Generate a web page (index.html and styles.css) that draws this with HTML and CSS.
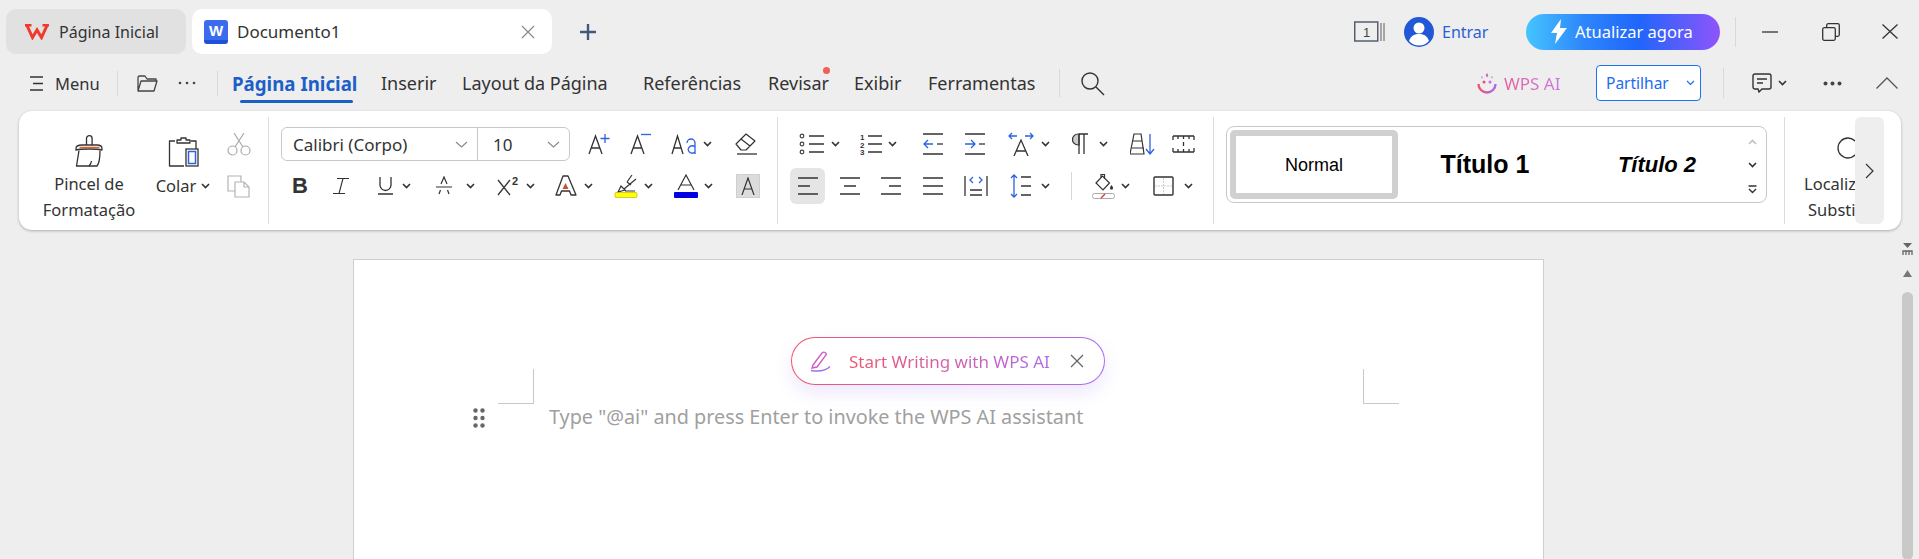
FILE: index.html
```html
<!DOCTYPE html>
<html lang="pt">
<head>
<meta charset="utf-8">
<title>Documento1</title>
<link rel="stylesheet" href="styles.css">
</head>
<body>
<svg class="defs" width="0" height="0"><defs>
<symbol id="chev" viewBox="0 0 9 6"><path d="M1 1l3.500 3.500L8 1" fill="none" stroke="#333" stroke-width="1.600"/></symbol>
</defs></svg>

<header class="tabbar">
  <div class="tab tab-home">
    <svg class="wps-logo" width="24" height="16" viewBox="0 0 24 16"><path d="M2 1.500L7.500 13.500 12 6l4.500 7.500L22 1.500" fill="none" stroke="#f0392b" stroke-width="3"/><path d="M0 1.300h6.500M17.500 1.300H24" stroke="#f0392b" stroke-width="2.600"/></svg>
    <span>Página Inicial</span>
  </div>
  <div class="tab tab-doc">
    <span class="doc-icon">W</span>
    <span class="doc-name">Documento1</span>
    <svg class="tab-close" width="14" height="14" viewBox="0 0 14 14"><path d="M1 1l12 12M13 1L1 13" stroke="#8a8a8a" stroke-width="1.200"/></svg>
  </div>
  <svg class="plus" width="20" height="20" viewBox="0 0 20 20"><path d="M10 2v16M2 10h16" stroke="#46587a" stroke-width="2.400"/></svg>
  <div class="win-right">
    <svg class="count" width="31" height="21" viewBox="0 0 31 21"><rect x=".75" y="1" width="23" height="19" fill="none" stroke="#555e70" stroke-width="1.500"/><path d="M27 2v18M30 2v18" stroke="#777" stroke-width="1.200"/><text x="9" y="16" class="count-n">1</text></svg>
    <svg class="avatar" width="30" height="30" viewBox="0 0 30 30"><circle cx="15" cy="15" r="15" fill="#2257d8"/><circle cx="15" cy="11" r="5.500" fill="#fff"/><path d="M5 24c2-6 6-7 10-7s8 1 10 7c-3 3-6 4.500-10 4.500S8 27 5 24z" fill="#fff"/></svg>
    <span class="enter">Entrar</span>
    <div class="upgrade">
      <svg width="16" height="25" viewBox="0 0 16 25"><path d="M10 0L0 14h6l-2 11L16 9h-7z" fill="#fff"/></svg>
      <span>Atualizar agora</span>
    </div>
    <i class="sep sep-win"></i>
    <svg class="win-min" width="16" height="2" viewBox="0 0 16 2"><path d="M0 1h16" stroke="#333" stroke-width="1.300"/></svg>
    <svg class="win-max" width="18" height="18" viewBox="0 0 18 18"><rect x=".7" y="4.700" width="12.600" height="12.600" rx="1.500" fill="none" stroke="#333" stroke-width="1.300"/><path d="M4.700 4.500V2.200A1.500 1.500 0 0 1 6.200.7h9.600a1.500 1.500 0 0 1 1.500 1.500v9.600a1.500 1.500 0 0 1-1.500 1.500h-2.300" fill="none" stroke="#333" stroke-width="1.300"/></svg>
    <svg class="win-close" width="16" height="15" viewBox="0 0 16 15"><path d="M.5.500l15 14M15.500.500l-15 14" stroke="#333" stroke-width="1.300"/></svg>
  </div>
</header>

<nav class="menubar">
  <svg class="m-burger" width="13" height="15" viewBox="0 0 13 15"><path d="M0 1h13M3 7.500h10M0 14h13" stroke="#333" stroke-width="1.300"/></svg>
  <span class="m-menu">Menu</span>
  <i class="sep sep-m1"></i>
  <svg class="m-folder" width="21" height="17" viewBox="0 0 21 17"><path d="M1 15V2.500A1.500 1.500 0 0 1 2.500 1H8l2 3h9v2M1 16l3-10h16l-3 10z" fill="none" stroke="#444" stroke-width="1.300" stroke-linejoin="round"/></svg>
  <svg class="m-dots" width="18" height="4" viewBox="0 0 18 4"><circle cx="2" cy="2" r="1.300" fill="#444"/><circle cx="9" cy="2" r="1.300" fill="#444"/><circle cx="16" cy="2" r="1.300" fill="#444"/></svg>
  <i class="sep sep-m2"></i>
  <a class="mt mt-active">Página Inicial</a>
  <a class="mt mt-ins">Inserir</a>
  <a class="mt mt-lay">Layout da Página</a>
  <a class="mt mt-ref">Referências</a>
  <a class="mt mt-rev">Revisar<b class="red-dot"></b></a>
  <a class="mt mt-exi">Exibir</a>
  <a class="mt mt-fer">Ferramentas</a>
  <i class="sep sep-m3"></i>
  <svg class="m-search" width="25" height="25" viewBox="0 0 25 25"><circle cx="10" cy="10" r="8" fill="none" stroke="#333" stroke-width="1.400"/><path d="M16 16l8 8" stroke="#333" stroke-width="1.400"/></svg>
  <div class="menu-right">
    <svg class="ai-face" width="20" height="21" viewBox="0 0 20 21"><path d="M10 0l1.300 2.200L10 4.400 8.700 2.200z" fill="#d25cb5"/><path d="M15 3l.800 1.300L15 5.600l-.800-1.300zM5 3l.800 1.300L5 5.600l-.800-1.300z" fill="#d86cc0"/><circle cx="7" cy="9" r="1.500" fill="#e0527c"/><circle cx="13" cy="9" r="1.500" fill="#c56ce0"/><path d="M1.500 11a8.500 8.500 0 0 0 17 0" fill="none" stroke="url(#aig)" stroke-width="2.400"/><defs><linearGradient id="aig" x1="0" x2="1"><stop offset="0" stop-color="#f0566c"/><stop offset="1" stop-color="#a86cf0"/></linearGradient></defs></svg>
    <span class="ai-text">WPS AI</span>
    <div class="share"><span>Partilhar</span><svg width="9" height="6" viewBox="0 0 9 6"><path d="M1 1l3.500 3.500L8 1" fill="none" stroke="#1a6cf0" stroke-width="1.200"/></svg></div>
    <i class="sep sep-m4"></i>
    <svg class="m-comment" width="20" height="20" viewBox="0 0 20 20"><path d="M3 1h14a2 2 0 0 1 2 2v11a2 2 0 0 1-2 2h-7l-3 3-1-3H3a2 2 0 0 1-2-2V3a2 2 0 0 1 2-2zM5 6h10M5 10h6" fill="none" stroke="#333" stroke-width="1.400"/></svg>
    <svg class="m-cchev" width="9" height="6"><use href="#chev"/></svg>
    <svg class="m-more" width="19" height="5" viewBox="0 0 19 5"><circle cx="2.500" cy="2.500" r="2" fill="#444"/><circle cx="9.500" cy="2.500" r="2" fill="#444"/><circle cx="16.500" cy="2.500" r="2" fill="#444"/></svg>
    <svg class="m-collapse" width="22" height="12" viewBox="0 0 22 12"><path d="M.5 11.500L11 1l10.500 10.500" fill="none" stroke="#555" stroke-width="1.300"/></svg>
  </div>
</nav>

<section class="ribbon">
  <div class="grp grp-clip">
    <div class="big big-brush">
      <svg width="28" height="32" viewBox="0 0 28 32"><g fill="none" stroke="#333" stroke-width="1.300" stroke-linejoin="round"><path d="M11.500 10V3.500a2.800 2.800 0 0 1 5.600 0V10"/><path d="M7 10h15c3 0 5 1 5 3.500V15c-4-1-8-1-13-1s-9 0-13 1v-1.500C1 11 4 10 7 10z"/><path d="M4 15.500L1.500 31H22c2.500-3 3-9 3-15.500"/><path d="M14 31c1.500-1.500 2.300-3.500 2.500-5"/></g><path d="M4.500 12.500h20" stroke="#d4622a" stroke-width="1.500"/></svg>
      <span>Pincel de<br>Formatação</span>
    </div>
    <div class="big big-paste">
      <svg width="31" height="30" viewBox="0 0 31 30"><g fill="none" stroke="#333" stroke-width="1.300" stroke-linejoin="round"><path d="M7 4H1.500v25H16M23 4h5v8"/><path d="M9 6V3h4V1h5v2h4v3z"/></g><rect x="18" y="12" width="12" height="17" fill="#fff" stroke="#333" stroke-width="1.300"/><rect x="20.500" y="14.500" width="7" height="12" fill="#fff" stroke="#2d62e0" stroke-width="1.500"/></svg>
      <span class="paste-l">Colar<svg width="9" height="6"><use href="#chev"/></svg></span>
    </div>
    <div class="small-col">
      <svg width="24" height="23" viewBox="0 0 24 23"><g fill="none" stroke="#aaa" stroke-width="1.200"><circle cx="5.500" cy="17.500" r="4.500"/><circle cx="18.500" cy="17.500" r="4.500"/><path d="M8 14L17 0M16 14L7 0"/></g></svg>
      <svg width="23" height="23" viewBox="0 0 23 23"><g fill="none" stroke="#b4b4b4" stroke-width="1.200"><path d="M8 1H1v15h7"/><path d="M8 7h9l5 5v10H8zM17 7v5h5" fill="#fff"/><path d="M8 1h6v6"/></g></svg>
    </div>
  </div>
  <i class="rsep"></i>

  <div class="grp grp-font">
    <div class="row r1 font-r1">
      <div class="fontbox">
        <span class="fb-name">Calibri (Corpo)</span><svg width="13" height="7" viewBox="0 0 13 7"><path d="M1 1l5.500 5L12 1" fill="none" stroke="#888" stroke-width="1.100"/></svg>
        <i class="fb-div"></i>
        <span class="fb-size">10</span><svg width="13" height="7" viewBox="0 0 13 7"><path d="M1 1l5.500 5L12 1" fill="none" stroke="#888" stroke-width="1.100"/></svg>
      </div>
      <svg width="22" height="22" viewBox="0 0 22 22"><path d="M1 21L7.500 3 14 21M3.500 15h8" fill="none" stroke="#333" stroke-width="1.300"/><path d="M17 1v9M12.500 5.500h9" stroke="#2d62e0" stroke-width="1.300"/></svg>
      <svg width="22" height="22" viewBox="0 0 22 22"><path d="M1 21L7.500 3 14 21M3.500 15h8" fill="none" stroke="#333" stroke-width="1.300"/><path d="M11 1.500h10" stroke="#2d62e0" stroke-width="1.300"/></svg>
      <div class="t"><svg width="26" height="22" viewBox="0 0 26 22"><path d="M1 21L6.500 3 12 21M3 15h7" fill="none" stroke="#333" stroke-width="1.300"/><path d="M16 10a4 4 0 0 1 8 0v11M24 14a4 3.500 0 1 0 0 5" fill="none" stroke="#2d62e0" stroke-width="1.300"/></svg><svg width="9" height="6"><use href="#chev"/></svg></div>
      <svg width="24" height="22" viewBox="0 0 24 22"><path d="M2 11L12 1l9 7-9 9H7zM7 6l9 7" fill="none" stroke="#333" stroke-width="1.200" stroke-linejoin="round"/><path d="M3 21h20" stroke="#333" stroke-width="1.300"/></svg>
    </div>
    <div class="row r2 font-r2">
      <span class="bold-b">B</span>
      <span class="ital-i"><svg width="18" height="18" viewBox="0 0 18 18"><path d="M5 1.500h12M11 1.500L7 16.500M1 16.500h12" fill="none" stroke="#333" stroke-width="1.100"/></svg></span>
      <div class="t"><svg width="18" height="20" viewBox="0 0 18 20"><path d="M2 1v8a5.500 5.500 0 0 0 11 0V1M0 18h15" fill="none" stroke="#333" stroke-width="1.300"/></svg><svg width="9" height="6"><use href="#chev"/></svg></div>
      <div class="t t-wide"><svg width="20" height="20" viewBox="0 0 20 20"><path d="M3 18l1.500-4M13 18l-1.500-4M5 8l3-7 3 7M0 11h16" fill="none" stroke="#333" stroke-width="1.200"/></svg><svg width="9" height="6"><use href="#chev"/></svg></div>
      <div class="t t-sup"><svg width="24" height="20" viewBox="0 0 24 20"><path d="M1 4l12 15M13 4L1 19" stroke="#333" stroke-width="1.300"/><text x="15" y="9" class="sup">2</text></svg><svg width="9" height="6"><use href="#chev"/></svg></div>
      <div class="t"><svg width="23" height="22" viewBox="0 0 23 22"><path d="M8 1h5l8 19h-5l-1.500-4h-8L5 20H1z" fill="none" stroke="#333" stroke-width="1.300" stroke-linejoin="round"/><path d="M10.500 8l3 6h-6z" fill="#c8502a"/></svg><svg width="9" height="6"><use href="#chev"/></svg></div>
      <div class="t"><svg width="24" height="24" viewBox="0 0 24 24"><path d="M18 1l-5 7M22 5L10 15M7 12l-3 6 7-2zM13 8l4 3M11 17h10" fill="none" stroke="#333" stroke-width="1.200"/><rect x="1" y="18.500" width="22" height="5" rx="1" fill="#ffff00" stroke="#b8a800" stroke-width=".600"/></svg><svg width="9" height="6"><use href="#chev"/></svg></div>
      <div class="t"><svg width="24" height="24" viewBox="0 0 24 24"><path d="M4 16L12 1l8 15M7 11h10" fill="none" stroke="#333" stroke-width="1.200"/><rect y="18" width="24" height="6" rx="1" fill="#0000e0"/></svg><svg width="9" height="6"><use href="#chev"/></svg></div>
      <span class="grey-a"><svg width="14" height="18" viewBox="0 0 14 18"><path d="M1 18L7 1l6 17M3 12h8" fill="none" stroke="#333" stroke-width="1.200"/></svg></span>
    </div>
  </div>
  <i class="rsep"></i>

  <div class="grp grp-para">
    <div class="row r1 para-r1">
      <div class="t"><svg width="26" height="22" viewBox="0 0 26 22"><g fill="none" stroke="#444" stroke-width="1.200"><circle cx="3" cy="3" r="1.800"/><circle cx="3" cy="11" r="1.800"/><circle cx="3" cy="19" r="1.800"/></g><path d="M10 3h15M10 11h15M10 19h15" stroke="#333" stroke-width="1.400"/></svg><svg width="9" height="6"><use href="#chev"/></svg></div>
      <div class="t"><svg width="22" height="22" viewBox="0 0 22 22"><text x="0" y="7" class="num">1</text><text x="0" y="14.500" class="num">2</text><text x="0" y="22" class="num">3</text><path d="M8 3h14M8 11h14M8 19h14" stroke="#333" stroke-width="1.400"/></svg><svg width="9" height="6"><use href="#chev"/></svg></div>
      <svg width="20" height="22" viewBox="0 0 20 22"><path d="M0 1h20M0 21h20" stroke="#333" stroke-width="1.300"/><path d="M10 11H1M5 7l-4 4 4 4" fill="none" stroke="#2d62e0" stroke-width="1.300"/><path d="M14 11h6" stroke="#333" stroke-width="1.300"/></svg>
      <svg width="20" height="22" viewBox="0 0 20 22"><path d="M0 1h20M0 21h20" stroke="#333" stroke-width="1.300"/><path d="M0 11h10M6 7l4 4-4 4" fill="none" stroke="#2d62e0" stroke-width="1.300"/><path d="M14 11h6" stroke="#333" stroke-width="1.300"/></svg>
      <div class="t t-gap0"><svg width="26" height="24" viewBox="0 0 26 24"><path d="M6 24L13 8l7 16M8.500 19h9" fill="none" stroke="#333" stroke-width="1.300"/><path d="M1 4h8M4 1L1 4l3 3M25 4h-8M22 1l3 3-3 3" fill="none" stroke="#2d62e0" stroke-width="1.300"/></svg><svg width="9" height="6"><use href="#chev"/></svg></div>
      <div class="t t-wide"><svg width="17" height="22" viewBox="0 0 17 22"><path d="M7 1H6a5.500 5.500 0 0 0 0 11h1z" fill="#ccc" stroke="#333" stroke-width="1.200"/><path d="M7 1h9M7 1v20M12 1v20" fill="none" stroke="#333" stroke-width="1.300"/></svg><svg width="9" height="6"><use href="#chev"/></svg></div>
      <svg width="25" height="22" viewBox="0 0 25 22"><path d="M4 1h7l3 20H0zM2 15h12M3 8h9" fill="none" stroke="#333" stroke-width="1.200"/><path d="M20 1v20M16 16l4 5 4-5" fill="none" stroke="#2d62e0" stroke-width="1.300"/></svg>
      <svg width="23" height="18" viewBox="0 0 23 18"><path d="M1 1h21M1 17h21M1 1v4M22 1v4M1 13v4M22 13v4M6 1v3M11.500 1v3M17 1v3M6 17v-3M11.500 17v-3M17 17v-3M11.500 7v4" fill="none" stroke="#333" stroke-width="1.300"/></svg>
    </div>
    <div class="row r2 para-r2">
      <span class="al-active"><svg width="20" height="18" viewBox="0 0 20 18"><path d="M0 1h20M0 9h12M0 17h20" stroke="#333" stroke-width="1.400"/></svg></span>
      <svg width="20" height="18" viewBox="0 0 20 18"><path d="M0 1h20M4 9h12M0 17h20" stroke="#333" stroke-width="1.400"/></svg>
      <svg width="20" height="18" viewBox="0 0 20 18"><path d="M0 1h20M8 9h12M0 17h20" stroke="#333" stroke-width="1.400"/></svg>
      <svg width="20" height="18" viewBox="0 0 20 18"><path d="M0 1h20M0 9h20M0 17h20" stroke="#333" stroke-width="1.400"/></svg>
      <svg width="24" height="22" viewBox="0 0 24 22"><path d="M1 1v20M23 1v20M6 15h12M6 20h12" stroke="#333" stroke-width="1.300"/><path d="M9 2L6 5l3 3M15 2l3 3-3 3" fill="none" stroke="#2d62e0" stroke-width="1.300"/></svg>
      <div class="t t-wide"><svg width="21" height="24" viewBox="0 0 21 24"><path d="M4 1v22M1 4l3-3 3 3M1 20l3 3 3-3" fill="none" stroke="#2d62e0" stroke-width="1.300"/><path d="M11 3h10M11 12h10M11 21h10" stroke="#333" stroke-width="1.300"/></svg><svg width="9" height="6"><use href="#chev"/></svg></div>
      <i class="sep sep-para"></i>
      <div class="t"><svg width="23" height="26" viewBox="0 0 23 26"><path d="M4 10l6.500-7 7 7-6.500 7zM9 5V1.500h3.500V6" fill="none" stroke="#333" stroke-width="1.200"/><path d="M19.500 12c2 2.500 2 4.500 0 4.500s-2-2 0-4.500z" fill="#333"/><rect x=".5" y="20.500" width="22" height="5" rx="2" fill="#fff" stroke="#aaa"/><path d="M9 25l4-4" stroke="#e03030" stroke-width="1.200"/></svg><svg width="9" height="6"><use href="#chev"/></svg></div>
      <div class="t t-wide"><svg width="21" height="20" viewBox="0 0 21 20"><rect x="1" y="1" width="19" height="18" rx="1" fill="none" stroke="#333" stroke-width="1.400"/><path d="M10.500 2v16M2 10h17" stroke="#ccc" stroke-dasharray="2 1"/></svg><svg width="9" height="6"><use href="#chev"/></svg></div>
    </div>
  </div>
  <i class="rsep"></i>

  <div class="gallery">
    <div class="style-normal">Normal</div>
    <div class="style-h1">Título 1</div>
    <div class="style-h2">Título 2</div>
    <div class="style-scroll">
      <svg width="9" height="6" class="faded"><use href="#chev"/></svg>
      <svg width="9" height="6"><use href="#chev"/></svg>
      <svg width="9" height="9" viewBox="0 0 9 9"><path d="M.5 1h8M1 4l3.500 3.500L8 4" fill="none" stroke="#333" stroke-width="1.400"/></svg>
    </div>
  </div>
  <i class="rsep rsep-last"></i>

  <div class="find">
    <svg width="22" height="22" viewBox="0 0 22 22"><circle cx="11" cy="11" r="10" fill="none" stroke="#333" stroke-width="1.300"/></svg>
    <span class="find-a">Localizar e</span>
    <span class="find-b">Substituir</span>
  </div>
  <div class="rib-next"><svg width="9" height="16" viewBox="0 0 9 16"><path d="M1 1l7 7-7 7" fill="none" stroke="#333" stroke-width="1.200"/></svg></div>
</section>

<main class="workspace">
  <article class="page">
    <div class="ai-pill">
      <svg width="22" height="21" viewBox="0 0 22 21"><path d="M4 14L13 2c2-2 5 0 4 2L8 16l-5 1z" fill="none" stroke="#cc5fc0" stroke-width="1.400"/><path d="M2 19.500c6 1 14 1 19-4" fill="none" stroke="#a36cf0" stroke-width="1.400"/></svg>
      <span class="pill-text">Start Writing with WPS AI</span>
      <svg width="14" height="14" viewBox="0 0 14 14"><path d="M1 1l12 12M13 1L1 13" stroke="#666" stroke-width="1.300"/></svg>
    </div>
    <div class="marks"><i class="mark-l"></i><i class="mark-r"></i></div>
    <div class="line">
      <svg class="drag" width="12" height="20" viewBox="0 0 12 20"><g fill="#666"><circle cx="2.500" cy="2.500" r="2.200"/><circle cx="9.500" cy="2.500" r="2.200"/><circle cx="2.500" cy="10" r="2.200"/><circle cx="9.500" cy="10" r="2.200"/><circle cx="2.500" cy="17.500" r="2.200"/><circle cx="9.500" cy="17.500" r="2.200"/></g></svg>
      <span class="placeholder">Type "@ai" and press Enter to invoke the WPS AI assistant</span>
    </div>
  </article>
  <aside class="vscroll">
    <svg width="11" height="12" viewBox="0 0 11 12"><path d="M1 0h9L5.500 5z" fill="#666"/><path d="M1 12V8h9v4M4 8v4M7 8v4" fill="none" stroke="#666" stroke-width="1.300"/></svg>
    <svg class="vs-up" width="9" height="7" viewBox="0 0 9 7"><path d="M4.500 0L9 7H0z" fill="#777"/></svg>
    <div class="thumb"></div>
  </aside>
</main>
</body>
</html>
```
FILE: styles.css
```css
* { box-sizing: border-box; }
html, body { margin: 0; height: 559px; overflow: hidden; }
body { width: 1919px; background: #eeeeee; color: #333; font-family: "Noto Sans", "Open Sans", sans-serif; font-size: 16px; }
svg { display: block; flex: none; overflow: hidden; }
.defs { position: absolute; }
i { display: block; }
.sep { width: 1px; background: #d8d8d8; flex: none; }

/* tab bar */
.tabbar { height: 59px; padding: 9px 0 0 6px; display: flex; align-items: flex-start; }
.tab { height: 45px; border-radius: 10px; display: flex; align-items: center; flex: none; font-size: 16px; }
.tab-home { width: 180px; background: #e1e1e1; padding-left: 19px; gap: 10px; }
.tab-doc { width: 360px; margin-left: 6px; background: #fff; padding-left: 12px; }
.doc-icon { width: 24px; height: 24px; border-radius: 3px; background: linear-gradient(#3b6cf0 82%, #1f50d8 82%); color: #fff; font: bold 15px/22px "Liberation Sans", sans-serif; text-align: center; }
.doc-name { margin-left: 9px; flex: 1; font-size: 17px; }
.tab-close { margin-right: 17px; }
.plus { margin: 13px 0 0 26px; }
.win-right { margin-left: auto; height: 45px; display: flex; align-items: center; padding-right: 21px; }
.count-n { font: 13px "Liberation Sans", sans-serif; fill: #444; }
.avatar { margin-left: 19px; }
.enter { margin-left: 8px; color: #2a5fd6; font-size: 16px; width: 84px; }
.upgrade { width: 194px; height: 36px; border-radius: 18px; display: flex; align-items: center; gap: 8px; padding-left: 25px; color: #fff; font-size: 16.500px; background: linear-gradient(90deg, #45c4ff 0%, #2d86fb 30%, #1f66fb 58%, #8f54fb 100%); }
.sep-win { height: 30px; margin-left: 15px; }
.win-min { margin-left: 26px; }
.win-max { margin-left: 44px; }
.win-close { margin-left: 42px; }

/* menu row */
.menubar { height: 52px; padding: 0 0 4px 30px; display: flex; align-items: center; }
.m-menu { margin-left: 12px; font-size: 16.500px; width: 43px; white-space: nowrap; }
.sep-m1 { height: 25px; margin-left: 19px; }
.m-folder { margin-left: 19px; }
.m-dots { margin-left: 20px; }
.sep-m2 { height: 25px; margin-left: 21px; }
.mt { position: relative; font-size: 18px; color: #333; white-space: nowrap; flex: none; }
.mt-active { margin-left: 14px; width: 126px; color: #1d5fc9; font-weight: 700; font-size: 18.700px; }
.mt-active::after { content: ""; position: absolute; left: 8px; right: 5px; top: 29px; height: 3px; border-radius: 2px; background: #1d5fc9; }
.mt-ins { margin-left: 23px; width: 52px; }
.mt-lay { margin-left: 29px; width: 148px; }
.mt-ref { margin-left: 33px; width: 97px; }
.mt-rev { margin-left: 28px; width: 61px; }
.mt-exi { margin-left: 25px; width: 48px; }
.mt-fer { margin-left: 26px; width: 107px; }
.red-dot { position: absolute; right: -1px; top: -4px; width: 7px; height: 7px; border-radius: 50%; background: #f0605a; }
.sep-m3 { height: 28px; margin-left: 24px; }
.m-search { margin-left: 20px; }
.menu-right { margin-left: auto; display: flex; align-items: center; padding-right: 21px; }
.ai-text { margin-left: 7px; width: 60px; font-size: 17px; white-space: nowrap; color: transparent; background: linear-gradient(90deg, #e8609e, #c77ae6); -webkit-background-clip: text; background-clip: text; }
.share { margin-left: 32px; width: 105px; height: 36px; border: 1px solid #1a73f0; border-radius: 4px; background: #fff; color: #1a6cf0; font-size: 15.500px; display: flex; align-items: center; padding-left: 9px; }
.share svg { margin-left: 17px; }
.sep-m4 { height: 30px; margin-left: 22px; }
.m-comment { margin-left: 28px; }
.m-cchev { margin-left: 6px; }
.m-more { margin-left: 36px; }
.m-collapse { margin-left: 34px; }

/* ribbon */
.ribbon { margin-left: 18.500px; width: 1882.500px; height: 119px; background: #fff; border-radius: 13px; box-shadow: 0 1px 3px rgba(0,0,0,.28); padding-top: 6px; display: flex; align-items: flex-start; }
.rsep { width: 1px; height: 107px; background: #dcdcdc; flex: none; }
.grp { flex: none; height: 107px; }
.grp-clip { width: 249.500px; display: flex; align-items: flex-start; font-size: 16.500px; }
.big { display: flex; flex-direction: column; align-items: center; text-align: center; }
.big-brush { margin-left: 22px; width: 97px; padding-top: 18px; line-height: 26px; }
.big-brush span { margin-top: 4px; white-space: nowrap; }
.big-paste { margin-left: 20.500px; padding-top: 20px; width: 50px; }
.paste-l { display: flex; align-items: center; gap: 5px; margin-top: 6px; line-height: 26px; white-space: nowrap; }
.small-col { margin-left: 19px; padding-top: 16px; display: flex; flex-direction: column; gap: 19px; }
.row { display: grid; align-items: center; justify-items: start; }
.r1 { height: 34px; }
.r2 { height: 36px; margin-top: 7px; }
.grp-font { width: 508px; padding: 10px 0 0 12px; }
.font-r1 { grid-template-columns: 307px 42px 41px 63px 24px; }
.font-r2 { padding-left: 11px; grid-template-columns: 40px 46px 58px 61px 58px 59px 60px 62px 24px; }
.t { display: flex; align-items: center; gap: 6px; }
.t-wide { gap: 10px; }
.t-sup { gap: 5px; }
.t-gap0 { gap: 7px; }
.fontbox { width: 289px; height: 34px; border: 1px solid #c8c8c8; border-radius: 6px; display: flex; align-items: center; padding-left: 11px; font-size: 17px; }
.fb-name { width: 162px; white-space: nowrap; }
.fb-div { width: 1px; height: 32px; margin-left: 9px; background: #c8c8c8; }
.fb-size { margin-left: 15px; width: 54px; }
.bold-b { font: bold 22px/1 "Liberation Sans", sans-serif; }
.sup { font: bold 11px "Liberation Sans", sans-serif; fill: #333; }
.num { font: bold 8px "Liberation Sans", sans-serif; fill: #333; }
.grey-a { width: 24px; height: 24px; background: #dcdcdc; border: 1px solid #cfcfcf; display: flex; align-items: center; justify-content: center; }
.grp-para { width: 435px; padding: 10px 0 0 12px; }
.para-r1 { padding-left: 9px; grid-template-columns: 61px 63px 42px 43px 64px 58px 42px 24px; }
.para-r2 { grid-template-columns: 50px 41px 42px 41px 46px 61px 21px 61px 40px; }
.al-active { width: 35px; height: 36px; border-radius: 6px; background: #e5e5e5; display: flex; align-items: center; justify-content: center; }
.sep-para { height: 28px; }

/* style gallery */
.gallery { flex: none; width: 541px; height: 77px; margin: 9px 0 0 12px; border: 1px solid #c8c8c8; border-radius: 8px; padding: 3px; display: grid; grid-template-columns: 168px 174px 170px 20px; align-items: center; justify-items: center; font-family: "Liberation Sans", sans-serif; color: #000; }
.style-normal { width: 168px; height: 69px; border: 6px solid #d0d0d0; border-radius: 5px; font-size: 18px; padding-top: 1px; display: flex; align-items: center; justify-content: center; }
.style-h1 { font-size: 25px; font-weight: 700; }
.style-h2 { font-size: 22px; font-weight: 700; font-style: italic; }
.style-scroll { display: flex; flex-direction: column; align-items: center; gap: 17px; padding-top: 3px; }
.faded { transform: rotate(180deg); opacity: .3; }
.rsep-last { margin-left: 17px; }
.find { flex: none; width: 70px; height: 107px; overflow: hidden; font-size: 16.500px; line-height: 26px; white-space: nowrap; padding-top: 20px; }
.find svg { margin: 0 0 12px 52px; }
.find span { display: block; }
.find-a { padding-left: 19px; }
.find-b { padding-left: 23px; }
.rib-next { flex: none; width: 29px; height: 107px; background: #eeeeee; border-radius: 6px; display: flex; align-items: center; justify-content: center; }

/* document */
.workspace { display: flex; align-items: flex-start; height: 330px; padding-left: 353px; }
.page { position: relative; width: 1191px; height: 300px; margin-top: 29px; background: #fff; border: 1px solid #cfcfcf; border-bottom: 0; padding: 109px 144px 0; }
.ai-pill { position: absolute; left: 437px; top: 77px; width: 314px; height: 48px; border-radius: 24px; display: flex; align-items: center; padding-left: 17px; background: linear-gradient(#fff, #fff) padding-box, linear-gradient(100deg, #f0566c, #a86cf5) border-box; border: 1px solid transparent; box-shadow: 0 8px 18px rgba(150, 110, 245, .16); }
.pill-text { margin-left: 18px; width: 221px; font-size: 17px; white-space: nowrap; color: transparent; background: linear-gradient(90deg, #f0566c, #a86cf5); -webkit-background-clip: text; background-clip: text; }
.marks { display: flex; justify-content: space-between; height: 35px; }
.mark-l { width: 36px; border-right: 1px solid #c8c8c8; border-bottom: 1px solid #c8c8c8; }
.mark-r { width: 36px; border-left: 1px solid #c8c8c8; border-bottom: 1px solid #c8c8c8; }
.line { display: flex; align-items: center; height: 28px; margin-left: -25px; }
.placeholder { margin: 0 0 4px 64px; font-size: 19.800px; color: #a0a0a0; white-space: nowrap; }
.vscroll { margin-left: 358px; width: 11px; padding-top: 13px; display: flex; flex-direction: column; align-items: center; }
.vs-up { margin-top: 15px; }
.thumb { margin-top: 15px; width: 11px; height: 268px; border-radius: 6px; background: #c9c9c9; }
```
